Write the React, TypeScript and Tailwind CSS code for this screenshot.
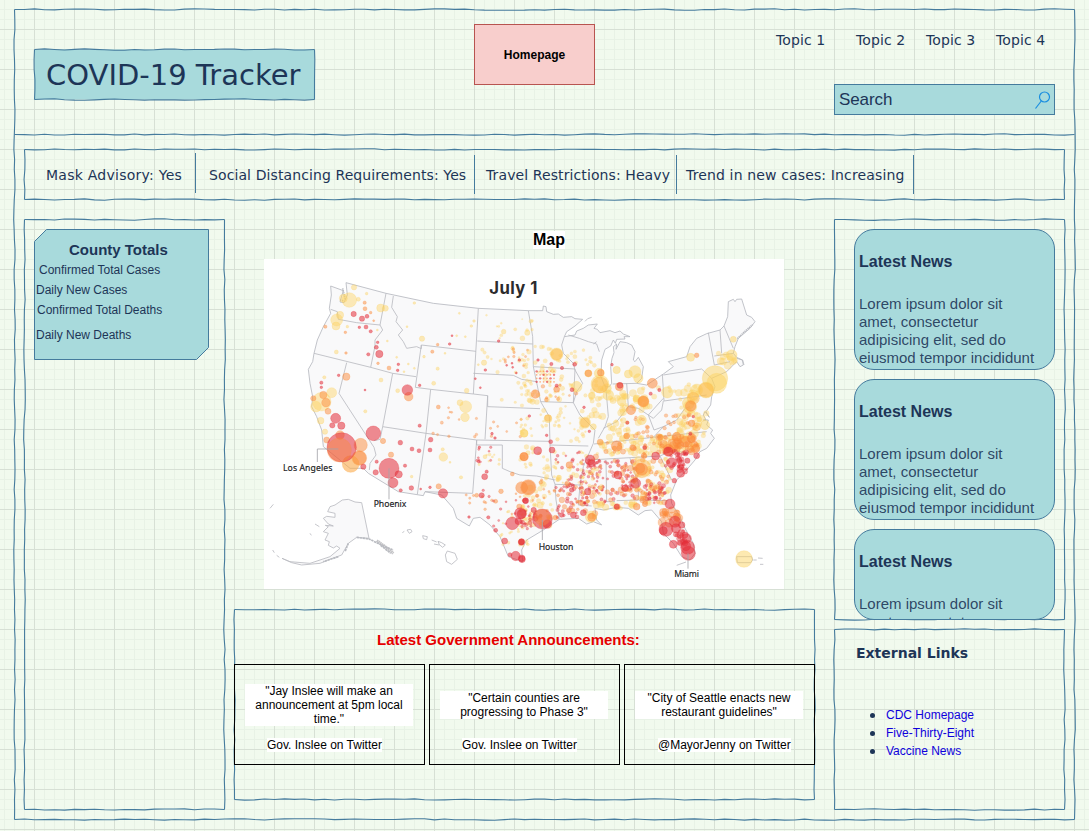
import type { ReactNode } from "react";

function rng(seed: number) {
  let s = seed * 7919 + 13;
  return () => {
    s = (s * 1103515245 + 12345) % 2147483648;
    return s / 2147483648;
  };
}

function wobble(x1: number, y1: number, x2: number, y2: number, rand: () => number) {
  const horizontal = y1 === y2;
  const length = horizontal ? x2 - x1 : y2 - y1;
  let d = `M${x1} ${y1}`;
  let off = 0;
  for (let t = 10; t < length - 4; t += 10) {
    off = off * 0.35 + (rand() - 0.5) * 1.25;
    d += horizontal ? `L${x1 + t} ${(y1 + off).toFixed(2)}` : `L${(x1 + off).toFixed(2)} ${y1 + t}`;
  }
  return d + `L${x2} ${y2}`;
}

type SketchProps = { w: number; h: number; seed: number; fill?: string; divider?: number };

function Sketch({ w, h, seed, fill = "none", divider }: SketchProps) {
  const r = rng(seed);
  return (
    <svg className="pointer-events-none absolute inset-0 overflow-visible" width={w} height={h}>
      {fill !== "none" && <rect x="0.5" y="0.5" width={w - 1} height={h - 1} fill={fill} />}
      <g fill="none" stroke="#457b9d" strokeWidth="1.1">
        <path d={wobble(0.5, 0.5, w - 0.5, 0.5, r)} />
        <path d={wobble(w - 0.5, 0.5, w - 0.5, h - 0.5, r)} />
        <path d={wobble(0.5, h - 0.5, w - 0.5, h - 0.5, r)} />
        <path d={wobble(0.5, 0.5, 0.5, h - 0.5, r)} />
        {divider && <path d={wobble(0.5, divider, w - 0.5, divider, r)} />}
      </g>
    </svg>
  );
}

const YELLOW = "#fcd364";
const ORANGE = "#fb8b3c";
const RED = "#e32d38";

function Dots({ data, color, opacity = 0.55 }: { data: string; color: string; opacity?: number }) {
  return (
    <g fill={color} stroke={color} fillOpacity={opacity} strokeOpacity={opacity} strokeWidth="1.5">
      {data.trim().split(/\s+/).map((item, i) => {
        const [x, y, r] = item.split(",");
        return <circle key={i} cx={x} cy={y} r={r} />;
      })}
    </g>
  );
}

type Area = [number, number, number, number, number, string, number, number];

const westAreas: Area[] = [
  [660, 280, 800, 360, 8, YELLOW, 2, 5],
  [665, 375, 810, 460, 16, YELLOW, 3, 6],
  [735, 380, 805, 460, 9, ORANGE, 3, 4],
  [690, 480, 810, 560, 12, YELLOW, 3, 6],
  [515, 560, 670, 650, 12, ORANGE, 3, 5],
  [690, 570, 800, 650, 8, ORANGE, 3, 4],
  [655, 685, 720, 735, 8, YELLOW, 3, 5],
  [645, 675, 695, 830, 10, RED, 3, 4],
  [600, 820, 800, 890, 14, ORANGE, 3, 4],
  [690, 840, 810, 930, 12, RED, 3, 4],
  [720, 860, 810, 985, 24, YELLOW, 3, 6],
];

const eastAreas: Area[] = [
  [5, 280, 40, 470, 12, YELLOW, 4, 8],
  [45, 375, 130, 440, 12, YELLOW, 4, 7],
  [45, 440, 130, 500, 14, YELLOW, 4, 8],
  [140, 390, 235, 440, 14, YELLOW, 4, 7],
  [5, 480, 60, 560, 14, YELLOW, 4, 9],
  [65, 490, 175, 540, 16, YELLOW, 3, 8],
  [65, 490, 175, 540, 8, ORANGE, 3, 6],
  [180, 480, 255, 600, 22, YELLOW, 5, 11],
  [265, 500, 320, 600, 18, YELLOW, 5, 11],
  [325, 500, 420, 570, 18, YELLOW, 5, 12],
  [435, 490, 560, 540, 16, YELLOW, 5, 12],
  [590, 400, 650, 440, 12, YELLOW, 6, 13],
  [0, 570, 85, 650, 16, YELLOW, 3, 7],
  [95, 555, 200, 665, 22, YELLOW, 3, 7],
  [0, 670, 90, 760, 18, YELLOW, 4, 8],
  [95, 695, 190, 790, 24, YELLOW, 3, 8],
  [105, 695, 180, 785, 14, RED, 3, 5],
  [0, 770, 105, 920, 44, YELLOW, 4, 10],
  [0, 780, 105, 900, 18, ORANGE, 3, 6],
  [0, 870, 50, 930, 14, RED, 3, 7],
  [108, 790, 180, 895, 34, RED, 3, 6],
  [108, 790, 225, 895, 28, ORANGE, 4, 9],
  [180, 720, 256, 855, 70, RED, 3, 5],
  [180, 700, 256, 855, 34, YELLOW, 4, 7],
  [262, 720, 350, 845, 46, RED, 3, 6],
  [262, 715, 350, 845, 24, ORANGE, 4, 9],
  [225, 845, 350, 865, 16, YELLOW, 6, 12],
  [340, 715, 450, 850, 56, YELLOW, 4, 10],
  [375, 790, 435, 850, 34, RED, 3, 7],
  [345, 720, 445, 850, 34, ORANGE, 4, 8],
  [240, 650, 400, 705, 46, YELLOW, 5, 10],
  [240, 600, 360, 650, 26, YELLOW, 4, 10],
  [340, 590, 400, 650, 12, ORANGE, 4, 7],
  [225, 660, 400, 715, 18, ORANGE, 4, 10],
  [400, 640, 550, 690, 46, YELLOW, 6, 13],
  [400, 650, 535, 700, 38, ORANGE, 5, 13],
  [430, 690, 505, 755, 34, RED, 4, 10],
  [470, 560, 560, 640, 28, YELLOW, 5, 13],
  [430, 570, 530, 650, 14, ORANGE, 4, 7],
  [425, 870, 480, 910, 16, ORANGE, 7, 13],
  [460, 930, 498, 970, 14, RED, 5, 10],
];

function Scatter({ areas, seed }: { areas: Area[]; seed: number }) {
  const r = rng(seed);
  return (
    <g>
      {areas.flatMap(([x1, y1, x2, y2, n, color, lo, hi], a) =>
        Array.from({ length: n }, (_, i) => (
          <circle
            key={`${a}-${i}`}
            cx={(x1 + r() * (x2 - x1)).toFixed(1)}
            cy={(y1 + r() * (y2 - y1)).toFixed(1)}
            r={(lo + Math.pow(r(), 1.4) * (hi - lo)).toFixed(1)}
            fill={color}
            stroke={color}
            strokeWidth="1.2"
            fillOpacity={color === YELLOW ? 0.4 : 0.42}
            strokeOpacity={color === YELLOW ? 0.3 : 0.55}
          />
        )),
      )}
    </g>
  );
}

function CornGrid() {
  const pts: [number, number][] = [];
  for (let x = 50; x <= 112; x += 10.4) for (let y = 454; y <= 490; y += 10.5) pts.push([x, y]);
  return (
    <g>
      {pts.map(([x, y], i) => (
        <circle key={i} cx={x} cy={y} r={i % 3 ? 2.6 : 3.6} fill={i % 3 ? ORANGE : RED} fillOpacity="0.6" />
      ))}
    </g>
  );
}

function UsMap() {
  return (
    <svg width="520" height="330" viewBox="12 117 1560 990" className="ml-[30px] block bg-white">
      <path
        fill="#f9f9fa"
        stroke="#b6b8bf"
        strokeWidth="2.5"
        strokeLinejoin="round"
        d="M212 198L250 212 246 225 240 246 252 248 262 225 258 188 378 220 520 250 655 265 805 272 848 272 850 258 858 260 860 275 880 283 895 282 910 292 935 290 945 296 968 298 945 318 920 335 913 350 945 345 950 333 970 325 985 315 1012 312 1002 325 1012 328 1020 338 1050 332 1065 338 1080 333 1090 342 1110 350 1092 350 1095 357 1070 358 1066 370 1060 360 1052 378 1035 388 1025 420 1023 470 1035 500 1048 500 1055 490 1052 440 1056 415 1062 398 1060 380 1070 372 1068 388 1080 365 1100 368 1115 375 1125 395 1120 420 1125 425 1135 412 1150 440 1145 475 1130 490 1160 495 1210 462 1240 440 1225 425 1280 410 1290 380 1310 355 1340 341 1380 330 1392 318 1403 290 1405 245 1420 238 1425 245 1430 238 1445 237 1460 285 1475 292 1485 305 1470 325 1435 355 1425 380 1420 400 1430 412 1447 420 1450 435 1440 440 1430 425 1400 455 1355 475 1365 500 1355 530 1352 555 1338 575 1348 592 1335 575 1330 585 1338 600 1330 600 1345 600 1340 615 1358 630 1352 640 1363 655 1340 685 1320 695 1305 720 1275 755 1250 780 1232 825 1235 850 1260 890 1275 925 1300 970 1305 1000 1290 1020 1265 1010 1240 970 1210 940 1205 905 1175 870 1155 872 1135 885 1105 865 1070 862 1030 870 1005 865 1010 900 1025 915 1000 905 980 912 955 895 898 898 850 930 800 960 785 990 788 1025 745 1010 720 950 690 915 660 892 640 895 628 918 590 895 580 865 545 825 495 815 490 827 415 815 325 760 310 745 270 745 215 700 190 680 185 630 170 590 155 560 158 530 150 490 145 448 158 425 162 400 172 360 190 320 212 280 208 265 214 225Z"
      />
      <g fill="none" stroke="#b9bbc1" strokeWidth="2.5" strokeLinejoin="round">
        <path d="M378 220L360 315 368 330 345 360 345 378 332 442M212 268L232 275 235 298 290 308 360 315M162 400L332 442 398 460 468 470M400 228L395 262 412 290 408 305 428 330 415 345 430 365 440 385 470 380 484 386 484 375 648 394M655 265L640 522M484 375L466 502 512 508 640 522 683 527 683 560 840 566M260 428L237 520 342 682 348 705 330 730 328 750M398 460L368 620 360 658 342 662M368 620L498 640 650 660 870 664M512 508L498 640 472 823M683 527L675 658M652 363L818 372M640 460L760 466 785 478 830 485M650 660L650 675 727 675 727 745 750 755 780 765 830 768 885 780M650 660L638 820 495 815M805 272L818 350 820 440 842 545 940 548 945 447 820 440M913 350L905 375 910 400 940 430 945 450 968 490 950 515 940 548 960 585 1005 630 1000 670 985 705 970 740 960 795 955 855 995 858M925 345L958 355 985 365 1010 372 1018 395M842 545L868 590 870 675 985 678M870 675L875 765 885 793 960 795M885 793L888 840 898 898M1037 495L1045 590 1035 620 1015 655M1100 490L1105 560 1070 605 1030 625M1105 560L1135 565 1165 585 1210 535M1058 492L1130 490M1002 672L1180 652 1340 635M985 720L1200 708M1038 720L1040 845 1065 845M1110 715L1135 790 1135 840 1070 842M1135 840L1225 842M1207 462L1212 543 1340 525M1210 543L1205 570 1180 595 1165 585 1182 630 1210 620 1250 600 1275 565 1290 560M1180 652L1210 620M1200 708L1240 690 1280 700M1200 708L1235 780M1345 338L1363 435 1410 425M1380 330L1385 400M1392 318L1420 385M1363 408L1420 400M1210 465L1325 447 1355 475" />
        <path d="M975 304L983 296 995 292 M1000 372L1010 365" />
        <path fill="#f9f9fa" d="M247 840L265 838 285 846 305 848 327 955 290 952 265 970 245 1005 215 1016 180 1030 125 1035 95 1028 66 1015 90 1025 150 1030 210 1010 240 985 230 978 220 984 205 976 208 965 195 960 205 940 190 935 205 920 196 916 220 918 205 912 190 895 200 889 225 892 225 880 203 875 210 860 225 855Z" />
        <path strokeWidth="9" stroke="#c3c3c6" strokeDasharray="5 1" d="M350 962L375 980 400 1000" />
        <path strokeWidth="5" strokeDasharray="7 2" d="M290 952L327 957 350 968 375 980 400 990M362 976L392 1000M265 970L255 995M235 1010L190 1025" />
        <path d="M30 865L40 853M38 990L43 998M50 1006L58 1012M165 912L178 920M150 940L154 946M427 938L433 934M441 930L452 928 456 935 448 940ZM488 947L502 950 500 959 490 956ZM515 960L530 966M522 972L538 975M534 964L545 968 556 975 548 982 538 974ZM562 993L585 1000 592 1018 575 1033 560 1025 556 1005Z" />
        <path d="M1430 1010H1475L1478 1020 1472 1028H1432ZM1480 1020L1490 1020M1494 1014L1508 1015M1500 1033L1510 1033M1250 1036L1278 1026M1430 415L1448 420 1452 435" />
        <path strokeWidth="5" strokeDasharray="4 2" d="M1432 356L1455 334 1478 314M240 240L252 243M248 205L256 240" />
      </g>

      <Scatter areas={westAreas} seed={5} />
      <g transform="translate(780 0)">
        <Scatter areas={eastAreas} seed={11} />
        <CornGrid />
      </g>

      <Dots
        color={YELLOW}
        opacity={0.45}
        data="268,240,22 250,235,12 282,202,8 320,221,4 362,264,12 376,265,9 230,300,18 240,285,11 228,318,12 295,238,6 262,320,4 463,249,4 598,280,3 486,356,8 441,320,3 642,303,4 634,318,4 590,347,3 616,350,3 229,396,6 193,472,5 363,480,6 413,512,6 521,490,6 533,446,5 555,400,3 492,410,4 382,363,3 352,330,3 410,412,3 432,455,3 445,432,3 463,445,3 672,428,8 655,434,3 620,512,7 600,548,9 617,560,18 615,592,13 731,335,7 802,338,8 215,518,15 185,545,28 168,560,16 195,635,8 182,602,10 316,574,5 550,711,13 548,688,5 603,772,5 455,770,4 570,727,3 675,710,6 793,640,11"
      />
      <Dots
        color={ORANGE}
        opacity={0.5}
        data="315,266,6 314,248,5 332,278,4 341,302,3 196,320,5 256,337,4 258,399,4 354,430,4 387,444,6 259,470,11 517,395,5 533,374,4 535,561,6 446,530,13 198,548,13 190,525,11 160,535,8 204,574,9 240,645,13 302,675,20 298,714,22 369,663,8 393,704,8 200,660,9 536,799,8 723,814,7 707,844,6 650,826,6 792,710,13 778,860,8 784,965,9 757,762,6"
      />
      <Dots color="#fcab4c" opacity={0.6} data="272,732,25" />
      <Dots
        color={RED}
        opacity={0.55}
        data="281,282,8 306,296,8 321,289,6 298,322,4 318,321,6 332,334,5 353,367,4 349,382,6 358,402,11 325,403,5 415,433,4 413,451,4 236,466,4 184,488,5 184,502,4 315,510,3 442,510,16 479,496,4 576,347,3 569,372,4 716,363,4 676,450,4 646,476,3 661,503,3 778,420,4 740,436,3 756,430,3 758,442,3 769,459,3 227,595,15 217,616,8 244,617,11 340,640,22 245,682,44 421,668,7 456,687,6 477,692,6 510,690,6 479,617,5 350,725,5 347,757,8 310,740,8 435,737,5 387,745,30 416,763,11 399,788,15 422,811,5 454,804,7 482,807,3 510,802,4 549,820,14 674,770,9 665,826,8 658,682,4 656,725,4 680,755,5 627,891,4 685,892,5 707,931,6 757,910,19 781,880,17 775,904,10 734,963,9 784,967,9 767,1008,14 786,1018,10 750,1004,6 696,641,4 705,654,4 796,842,8 512,659,7"
      />
      <Dots color={ORANGE} opacity={0.4} data="238,690,36 298,714,20" />
      <g transform="translate(780 0)">
        <Dots
          color={YELLOW}
          opacity={0.5}
          data="110,403,19 240,492,27 238,460,15 205,460,11 260,505,14 170,500,16 345,455,18 355,475,14 290,450,11 325,462,12 442,517,17 585,475,38 590,490,30 558,510,24 512,412,12 530,510,18 640,358,9 635,405,16 520,525,16 505,550,18 195,608,17 84,596,12 555,615,14 510,560,20 265,525,16 305,545,13 220,620,9 370,545,14 365,600,14 12,640,12 213,890,17 672,1017,25"
        />
        <Dots color="#fdb94e" opacity={0.5} data="110,403,17 240,495,24 558,510,22 370,545,17 195,608,14 520,535,18 84,594,10 530,620,12 365,745,28" />
        <Dots
          color={ORANGE}
          opacity={0.55}
          data="205,460,10 242,458,10 298,500,12 397,490,15 370,544,16 46,522,13 110,508,9 530,406,7 512,558,16 333,570,14 290,678,16 365,748,18 360,745,15 445,690,17 515,655,14 515,610,10 25,802,23 5,803,18 215,892,12 350,860,10 375,852,8 495,665,16 470,650,13 148,735,10 106,893,7 436,875,10 12,710,12 320,648,9 292,860,9"
        />
        <Dots
          color={RED}
          opacity={0.55}
          data="164,433,6 126,444,5 276,434,4 110,497,5 156,509,6 54,420,4 300,496,9 392,521,5 418,510,5 94,432,5 192,562,4 96,690,9 92,665,6 53,692,12 80,646,4 28,588,4 210,720,15 215,730,11 203,815,10 347,790,15 315,805,10 294,765,12 407,708,12 445,695,14 455,728,15 482,760,12 502,722,8 530,707,9 463,782,7 450,852,15 465,905,17 438,928,21 468,925,14 485,915,10 430,932,12 460,973,12 500,955,14 503,982,21 505,1000,21 498,978,14 495,945,9 67,897,30 82,912,13 5,882,14 17,842,9 41,870,8 5,965,9 5,1015,10 125,885,7 160,885,9 190,878,9 155,810,7 290,860,8 322,608,5 374,683,6 208,634,4 511,641,5 520,590,4"
        />
        <Dots color={ORANGE} opacity={0.4} data="67,892,24 25,802,20" />
      </g>

      <g fill="none" stroke="#a5a5aa" strokeWidth="2.5">
        <path d="M172 726V687H235M387 745V838M847 900V960M1284 1000V1046" />
      </g>
      <g fill="#1b1b1e" stroke="#1b1b1e" strokeWidth="0.5" fontFamily="'Noto Sans', sans-serif" fontSize="26">
        <text x="69" y="753" textLength="148">Los Angeles</text>
        <text x="341" y="862" textLength="98">Phoenix</text>
        <text x="836" y="990" textLength="104">Houston</text>
        <text x="1243" y="1070" textLength="74">Miami</text>
      </g>
      <text x="688" y="221" textLength="144" fontFamily="Inter, sans-serif" fontWeight="700" fontSize="50" fill="#2b2b2d">
        July 1
      </text>
    </svg>
  );
}

function NewsCard({ short = false }: { short?: boolean }) {
  return (
    <article
      className={
        (short ? "h-[91px]" : "h-[141px]") +
        " w-[201px] shrink-0 overflow-hidden rounded-[20px] border border-[#457b9d] bg-[#a8dadc] pl-1 pt-[23px]"
      }
    >
      <h3 className="text-[16px] font-bold leading-[18px]">Latest News</h3>
      <p className="mt-[24px] whitespace-nowrap text-[15px] leading-[18px] text-[#1d3557]/90">
        Lorem ipsum dolor sit
        <br />
        amet, consectetur
        {!short && (
          <>
            <br />
            adipisicing elit, sed do
            <br />
            eiusmod tempor incididunt
          </>
        )}
      </p>
    </article>
  );
}

function Announcement({ children, by, byClass }: { children: ReactNode; by: string; byClass: string }) {
  return (
    <div className="flex h-[101px] w-[191px] flex-col items-start border border-black text-[12px] leading-[14px] text-black">
      <div className="ml-[10px] flex h-[79px] w-[168px] shrink-0 items-center">
        <p className="w-full whitespace-nowrap bg-white text-center">{children}</p>
      </div>
      <p className={"-mt-[6px] whitespace-nowrap bg-white " + byClass}>{by}</p>
    </div>
  );
}

export default function App() {
  return (
    <div className="h-[831px] w-[1089px] overflow-hidden bg-[#f1faee] bg-[linear-gradient(to_right,#d7e0d5_1px,transparent_1px),linear-gradient(to_bottom,#d7e0d5_1px,transparent_1px),linear-gradient(to_right,#e8f2e6_1px,transparent_1px),linear-gradient(to_bottom,#e8f2e6_1px,transparent_1px)] bg-[length:40px_40px,40px_40px,10px_10px,10px_10px] bg-[position:34px_29px,34px_29px,4px_9px,4px_9px] pl-[14px] pt-[9px] font-['Liberation_Sans',Arial,sans-serif] text-[#1d3557]">
      <div className="relative h-[811px] w-[1061px]">
        <Sketch w={1061} h={811} seed={3} divider={125.5} />

        <header className="flex h-[140px] items-start">
          <div className="relative ml-5 mt-10 h-[51px] w-[281px]">
            <Sketch w={281} h={51} seed={8} fill="#a8dadc" />
            <h1 className="relative whitespace-nowrap pl-[12px] font-['DejaVu_Sans',Verdana,sans-serif] text-[29px] leading-[53px]">
              COVID-19 Tracker
            </h1>
          </div>
          <div className="ml-[159px] mt-[15px] flex h-[61px] w-[121px] items-center justify-center border border-[#b85450] bg-[#f8cecc] text-[12px] font-bold text-black">
            Homepage
          </div>
          <div className="ml-[181px] flex flex-col items-end">
            <nav className="mt-[21px] flex whitespace-nowrap font-['DejaVu_Sans',Verdana,sans-serif] text-[14px] leading-5 tracking-[0.1px]">
              <span className="w-[80px]">Topic 1</span>
              <span className="w-[70px]">Topic 2</span>
              <span className="w-[70px]">Topic 3</span>
              <span className="w-[59px]">Topic 4</span>
            </nav>
            <div className="mt-[34px] flex h-[31px] w-[221px] items-center justify-between border border-[#457b9d] bg-[#a8dadc] pl-1 pr-[3px] text-[17px] tracking-[-0.1px]">
              <span>Search</span>
              <svg width="17" height="20" viewBox="0 0 17 20" fill="none" stroke="#1a8ee0" strokeWidth="1.2">
                <circle cx="10.5" cy="7" r="5" />
                <path d="M7.3 11L1.5 18.5" />
              </svg>
            </div>
          </div>
        </header>

        <div className="relative ml-[10px] flex h-[51px] w-[1041px] items-start whitespace-nowrap font-['DejaVu_Sans',Verdana,sans-serif] text-[14px] leading-[40px] tracking-[0.1px]">
          <Sketch w={1041} h={51} seed={21} />
          <div className="mt-[4px] h-[40px] w-[172px] border-r border-[#457b9d] pl-[22px] leading-[44px] tracking-[0.25px]">
            Mask Advisory: Yes
          </div>
          <div className="mt-[6px] h-[39px] w-[279px] border-r border-[#457b9d] pl-[13px]">
            Social Distancing Requirements: Yes
          </div>
          <div className="mt-[6px] h-[39px] w-[202px] border-r border-[#457b9d] pl-[11px]">Travel Restrictions: Heavy</div>
          <div className="mt-[6px] h-[39px] w-[237px] border-r border-[#457b9d] pl-[9px] tracking-[0.14px]">
            Trend in new cases: Increasing
          </div>
        </div>

        <main className="ml-[10px] mt-[19px] flex items-start">
          <aside className="relative h-[591px] w-[201px] pl-[10px] pt-[10px]">
            <Sketch w={201} h={591} seed={34} />
            <div className="relative h-[131px] w-[175px]">
              <svg className="absolute inset-0" width="175" height="131">
                <path d="M12.5 .5H174.500V118.500L162.500 130.500H.5V12.500Z" fill="#a8dadc" stroke="#457b9d" />
              </svg>
              <div className="relative whitespace-nowrap pt-[11px] text-[12px] leading-5">
                <h2 className="pl-[35px] text-[15px] font-bold">County Totals</h2>
                <p className="pl-[5px]">Confirmed Total Cases</p>
                <p className="pl-[2px]">Daily New Cases</p>
                <p className="pl-[3px]">Confirmed Total Deaths</p>
                <p className="mt-[5px] pl-[2px]">Daily New Deaths</p>
              </div>
            </div>
          </aside>

          <section className="ml-[9px] w-[581px]">
            <div className="flex h-[40px] items-center justify-center pl-[49px] pt-[2px]">
              <h2 className="bg-white text-[16px] font-bold leading-[18px] text-black">Map</h2>
            </div>
            <UsMap />
            <div className="relative mt-[20px] h-[191px]">
              <Sketch w={581} h={191} seed={55} />
              <h2 className="relative whitespace-nowrap pl-[143px] pt-[21px] text-[15px] font-bold leading-5 text-[#e60000]">
                Latest Government Announcements:
              </h2>
              <div className="relative mt-[14px] flex gap-1">
                <Announcement by="Gov. Inslee on Twitter" byClass="ml-[32px]">
                  "Jay Inslee will make an
                  <br />
                  announcement at 5pm local
                  <br />
                  time."
                </Announcement>
                <Announcement by="Gov. Inslee on Twitter" byClass="ml-[32px]">
                  "Certain counties are
                  <br />
                  progressing to Phase 3"
                </Announcement>
                <Announcement by="@MayorJenny on Twitter" byClass="ml-[33px]">
                  "City of Seattle enacts new
                  <br />
                  restaurant guidelines"
                </Announcement>
              </div>
            </div>
          </section>

          <aside className="ml-[19px] w-[231px]">
            <div className="relative h-[401px] pl-5 pt-[10px]">
              <Sketch w={231} h={401} seed={61} />
              <div className="relative flex flex-col gap-[9px]">
                <NewsCard />
                <NewsCard />
                <NewsCard short />
              </div>
            </div>
            <div className="relative mt-[9px] h-[181px] pl-[22px] pt-[14px]">
              <Sketch w={231} h={181} seed={77} />
              <h2 className="relative whitespace-nowrap font-['DejaVu_Sans',Verdana,sans-serif] text-[14px] font-bold leading-5">
                External Links
              </h2>
              <ul className="relative mt-[43px] pl-[14px] text-[12px] leading-[18px] text-[#0f00dc]">
                {["CDC Homepage", "Five-Thirty-Eight", "Vaccine News"].map((label) => (
                  <li key={label} className="flex items-center">
                    <span className="mr-[11px] h-[5px] w-[5px] rounded-full bg-[#1d3557]" />
                    <a>{label}</a>
                  </li>
                ))}
              </ul>
            </div>
          </aside>
        </main>
      </div>
    </div>
  );
}
